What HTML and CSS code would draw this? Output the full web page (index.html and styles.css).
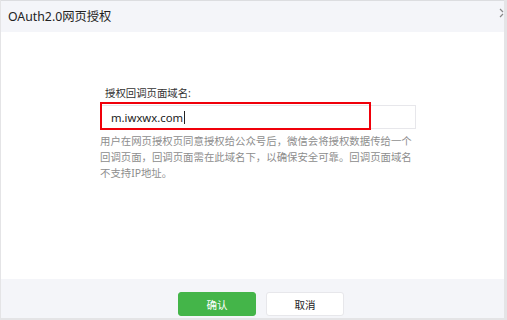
FILE: index.html
```html
<!DOCTYPE html>
<html lang="zh-CN">
<head>
  <meta charset="UTF-8"/>
  <title>OAuth2.0网页授权</title>
  <link rel="stylesheet" href="styles.css">
</head>
<body>
  <div class="dialog">
    <!-- Header -->
    <div class="dialog-hd">
      <h3 class="dialog-title">OAuth2.0网页授权</h3>
      <svg class="close" width="8" height="10" viewBox="0 0 8 10">
        <path d="M1 1 L4 4 M1 9 L4 6" stroke="#888" stroke-width="1.2" fill="none"/>
      </svg>
    </div>

    <!-- Body -->
    <div class="dialog-bd">
      <div class="field">
        <label class="field-label">授权回调页面域名:</label>
        <div class="input-box">
          <span class="input-text">m.iwxwx.com</span><span class="caret"></span>
          <div class="mark"></div>
        </div>
        <p class="field-tips">用户在网页授权页同意授权给公众号后，微信会将授权数据传给一个回调页面，回调页面需在此域名下，以确保安全可靠。回调页面域名不支持IP地址。</p>
      </div>
    </div>

    <!-- Footer -->
    <div class="dialog-ft">
      <button class="btn btn-primary">确认</button>
      <button class="btn btn-default">取消</button>
    </div>
  </div>
</body>
</html>
```

FILE: styles.css
```css
* { margin:0; padding:0; box-sizing:border-box }
html, body { width:100%; height:100%; overflow:hidden }
body {
  background:#e4e4e6;
  font-family: "Noto Sans", "Noto Sans CJK SC", sans-serif;
  color:#222;
}

.dialog {
  width:503px; height:318px;
  margin-left:1px;
  border-top:1px solid #dcdde0;
  background:#fff;
  display:flex; flex-direction:column;
}

/* Header */
.dialog-hd {
  height:31px;
  background:#f4f5f9;
  display:flex; align-items:center; justify-content:space-between;
  padding-left:7px;
  overflow:hidden;
}
.dialog-title {
  font-size:12.3px;
  font-weight:normal;
  color:#222;
  margin-top:-1px;
}
.close { margin-right:-3px; align-self:flex-start; margin-top:7px }

/* Body */
.dialog-bd {
  flex:1;
  padding:54px 0 0 99px;
}
.field-label {
  display:block;
  font-size:10.4px;
  color:#333;
  padding-left:5px;
  line-height:14px;
}
.input-box {
  position:relative;
  width:316px; height:24px;
  margin-top:5px;
  border:1px solid #e7e7eb;
  display:flex; align-items:center;
  padding-left:10px;
}
.input-text { font-size:11.3px; color:#222 }
.caret {
  display:inline-block;
  width:1px; height:13px;
  background:#222;
  margin-left:1px;
}
.mark {
  position:absolute;
  left:-1px; top:-4px;
  width:271px; height:28px;
  border:2.5px solid #f0000a;
}
.field-tips {
  width:318px;
  margin-top:4px;
  font-size:10.4px;
  line-height:16px;
  color:#8d8d8d;
}

/* Footer */
.dialog-ft {
  height:39px;
  background:#f4f5f9;
  display:flex; align-items:flex-start; gap:10px;
  padding:13px 0 0 177px;
}
.btn {
  width:78px; height:24px;
  border-radius:3px;
  font-family: "Noto Sans", "Noto Sans CJK SC", sans-serif;
  font-size:10.5px;
  cursor:pointer;
}
.btn-primary {
  background:#44b549;
  border:1px solid #44b549;
  color:#fff;
}
.btn-default {
  background:#fff;
  border:1px solid #e7e7eb;
  color:#222;
}
```
